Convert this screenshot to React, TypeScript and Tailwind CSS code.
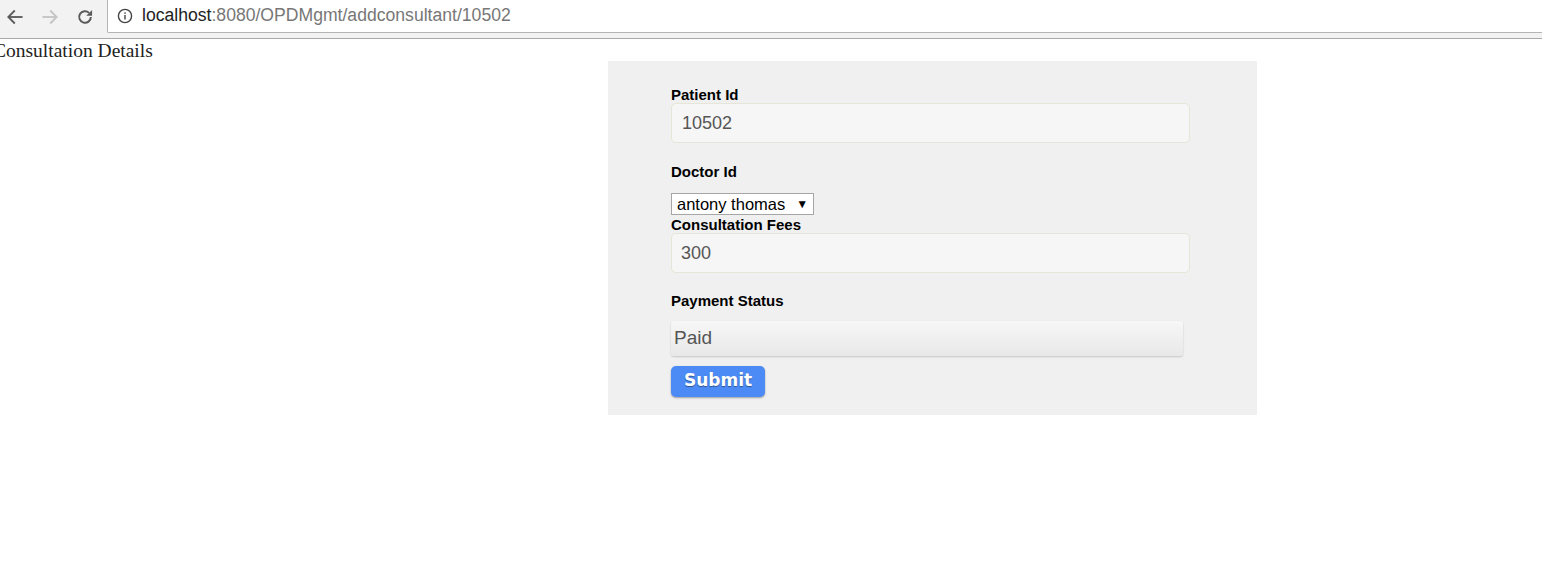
import React from "react";

function BackIcon({ color }: { color: string }) {
  return (
    <svg width="20" height="20" viewBox="0 0 24 24" fill="none" stroke={color} strokeWidth="2.2" strokeLinecap="square">
      <path d="M20 12H5" />
      <path d="M11 5l-7 7 7 7" />
    </svg>
  );
}

function ForwardIcon({ color }: { color: string }) {
  return (
    <svg width="20" height="20" viewBox="0 0 24 24" fill="none" stroke={color} strokeWidth="2.2" strokeLinecap="square">
      <path d="M4 12h15" />
      <path d="M13 5l7 7-7 7" />
    </svg>
  );
}

function ReloadIcon() {
  return (
    <svg width="20" height="20" viewBox="0 0 24 24" fill="none" stroke="#5a5a5a" strokeWidth="2.4">
      <path d="M19 12a7 7 0 1 1-2.05-4.95" />
      <path d="M20.5 3.5v7h-7z" fill="#5a5a5a" stroke="none" />
    </svg>
  );
}

function InfoIcon() {
  return (
    <svg width="16" height="16" viewBox="0 0 16 16" fill="none">
      <circle cx="8" cy="8" r="6.6" stroke="#444" strokeWidth="1.4" />
      <rect x="7.3" y="7" width="1.4" height="4.5" fill="#444" />
      <rect x="7.3" y="4.3" width="1.4" height="1.5" fill="#444" />
    </svg>
  );
}

export default function App() {
  const arial = { fontFamily: '"Liberation Sans", Arial, sans-serif' };
  return (
    <div className="w-[1542px] h-[582px] bg-white overflow-hidden" style={arial}>
      {/* Browser chrome */}
      <div className="h-[39px] bg-[#f2f2f2] border-b border-[#a9a9a9] flex flex-col">
        <div className="h-[33px] flex items-stretch">
          <div className="w-[107px] flex items-center pl-[5px] gap-[15px]">
            <BackIcon color="#5a5a5a" />
            <ForwardIcon color="#c4c4c4" />
            <ReloadIcon />
          </div>
          <div className="flex-1 bg-white border-l border-b border-[#b5b5b5] rounded-bl-[2px] flex items-center pl-[9px] gap-[9px]">
            <InfoIcon />
            <span className="text-[17.6px] leading-none">
              <span className="text-[#222]">localhost</span>
              <span className="text-[#777]">:8080/OPDMgmt/addconsultant/10502</span>
            </span>
          </div>
        </div>
      </div>

      {/* Page */}
      <div
        className="text-[19.5px] leading-[21px] pt-[1px] text-[#222] ml-[-7px] whitespace-nowrap"
        style={{ fontFamily: '"Liberation Serif", "DejaVu Serif", serif' }}
      >
        Consultation Details
      </div>

      <div className="ml-[608px] w-[649px] h-[354px] bg-[#f0f0f0] pt-[25px] pl-[63px]">
        <div className="text-[15px] font-bold leading-[17px] text-black">Patient Id</div>
        <div className="w-[519px] h-[40px] bg-[#f6f6f6] border border-[#e6e6d8] rounded-[5px] flex items-center pl-[10px] text-[18px] text-[#555]">
          10502
        </div>

        <div className="mt-[20px] text-[15px] font-bold leading-[17px] text-black">Doctor Id</div>
        <div className="mt-[13px] w-[143px] h-[22px] bg-white border border-[#a6a6a6] flex items-center pl-[5px] text-[16.5px] text-black">
          <span>antony thomas</span>
          <span className="ml-[11px] text-[12px]">▼</span>
        </div>

        <div className="mt-[1px] text-[15px] font-bold leading-[17px] text-black">Consultation Fees</div>
        <div className="w-[519px] h-[40px] bg-[#f6f6f6] border border-[#e6e6d8] rounded-[5px] flex items-center pl-[9px] text-[18px] text-[#555]">
          300
        </div>

        <div className="mt-[19px] text-[15px] font-bold leading-[17px] text-black">Payment Status</div>
        <div className="mt-[12px] w-[512px] h-[35px] rounded-[3px] bg-gradient-to-b from-[#f7f7f7] to-[#e8e8e8] shadow-[0_1px_2px_rgba(0,0,0,0.18)] flex items-center pl-[3px] text-[19px] text-[#555]">
          Paid
        </div>

        <button
          className="mt-[10px] w-[94px] h-[31px] rounded-[5px] bg-[#4c8bf5] shadow-[0_1px_2px_rgba(0,0,0,0.35)] text-white font-bold text-[17px] leading-none pb-[2px] [text-shadow:0_1px_1px_rgba(0,0,0,0.4)]"
          style={{ fontFamily: '"DejaVu Sans", Verdana, sans-serif' }}
        >
          Submit
        </button>
      </div>
    </div>
  );
}
